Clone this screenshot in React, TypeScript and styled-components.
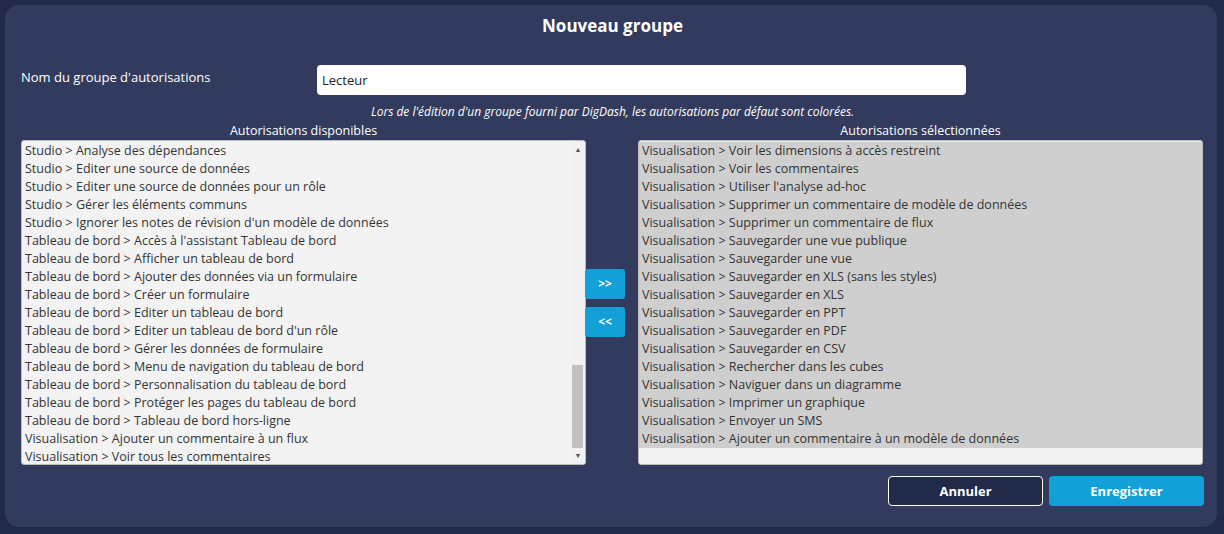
import React from "react";
import styled, { createGlobalStyle } from "styled-components";

const Global = createGlobalStyle`
  html, body { margin: 0; padding: 0; background: #222a4a; }
  body { font-family: "Open Sans", "Liberation Sans", sans-serif; }
`;

const Page = styled.div`
  width: 1224px; height: 534px; box-sizing: border-box; padding: 5px 7px 7px 5px;
`;
const Panel = styled.div`
  height: 100%; box-sizing: border-box; background: #323a5e; border-radius: 14px;
  padding: 10px 13px 0 16px; display: flex; flex-direction: column; color: #fff;
`;
const Title = styled.h1`
  margin: 0; text-align: center; font-size: 17px; font-weight: 700; line-height: 22px;
`;
const NameRow = styled.div`
  display: flex; align-items: center; margin-top: 28px; height: 30px;
`;
const Label = styled.label`
  width: 296px; font-size: 13px; margin-top: -6px;
`;
const Input = styled.div`
  width: 649px; height: 30px; box-sizing: border-box; background: #fff; border-radius: 4px;
  color: #222; font-size: 13px; line-height: 30px; padding-left: 5px;
`;
const Note = styled.div`
  text-align: center; font-style: italic; font-size: 12px; margin-top: 8px; line-height: 18px;
`;
const Lists = styled.div`
  display: flex; margin-top: 2px;
`;
const Col = styled.div`
  display: flex; flex-direction: column; width: 565px;
`;
const ColHead = styled.div`
  text-align: center; font-size: 12.5px; line-height: 16px; height: 17px;
`;
const Box = styled.div<{ $sel?: boolean }>`
  height: 325px; box-sizing: border-box; border: 1px solid #bbb; border-radius: 3px;
  background: #f3f3f3; display: flex; overflow: hidden; padding-top: 1px;
`;
const Items = styled.div<{ $sel?: boolean }>`
  flex: 1; display: flex; flex-direction: column; align-self: flex-start;
  background: ${p => (p.$sel ? "#cfcfcf" : "transparent")};
`;
const Item = styled.div`
  height: 18px; line-height: 18px; font-size: 12.5px; color: #333; padding-left: 3px; white-space: nowrap;
`;
const Scroll = styled.div`
  width: 14px; display: flex; flex-direction: column; align-items: center; background: #f1f1f1;
`;
const Arrow = styled.div`
  height: 16px; font-size: 7px; color: #555; line-height: 16px;
`;
const Track = styled.div`
  flex: 1; width: 100%; display: flex; flex-direction: column; justify-content: flex-end;
`;
const Thumb = styled.div`
  height: 83px; background: #c1c1c1; margin: 0 2px 0 1px;
`;
const Mid = styled.div`
  width: 52px; display: flex; flex-direction: column; align-items: center; justify-content: center; gap: 8px; padding-top: 17px;
`;
const MoveBtn = styled.button`
  width: 40px; height: 30px; border: 0; border-radius: 3px; background: #139fd8; color: #fff;
  font-family: inherit; font-size: 12px; font-weight: 700; margin-left: -14px;
`;
const Footer = styled.div`
  display: flex; justify-content: flex-end; gap: 6px; margin-top: 11px;
`;
const Btn = styled.button<{ $primary?: boolean }>`
  width: 155px; height: 30px; border-radius: 4px; font-family: inherit; font-size: 13px; font-weight: 700;
  color: #fff; cursor: pointer;
  background: ${p => (p.$primary ? "#139fd8" : "#222a4a")};
  border: ${p => (p.$primary ? "0" : "1px solid #fff")};
`;

const avail = [
  "Studio > Analyse des dépendances",
  "Studio > Editer une source de données",
  "Studio > Editer une source de données pour un rôle",
  "Studio > Gérer les éléments communs",
  "Studio > Ignorer les notes de révision d'un modèle de données",
  "Tableau de bord > Accès à l'assistant Tableau de bord",
  "Tableau de bord > Afficher un tableau de bord",
  "Tableau de bord > Ajouter des données via un formulaire",
  "Tableau de bord > Créer un formulaire",
  "Tableau de bord > Editer un tableau de bord",
  "Tableau de bord > Editer un tableau de bord d'un rôle",
  "Tableau de bord > Gérer les données de formulaire",
  "Tableau de bord > Menu de navigation du tableau de bord",
  "Tableau de bord > Personnalisation du tableau de bord",
  "Tableau de bord > Protéger les pages du tableau de bord",
  "Tableau de bord > Tableau de bord hors-ligne",
  "Visualisation > Ajouter un commentaire à un flux",
  "Visualisation > Voir tous les commentaires",
];
const sel = [
  "Voir les dimensions à accès restreint",
  "Voir les commentaires",
  "Utiliser l'analyse ad-hoc",
  "Supprimer un commentaire de modèle de données",
  "Supprimer un commentaire de flux",
  "Sauvegarder une vue publique",
  "Sauvegarder une vue",
  "Sauvegarder en XLS (sans les styles)",
  "Sauvegarder en XLS",
  "Sauvegarder en PPT",
  "Sauvegarder en PDF",
  "Sauvegarder en CSV",
  "Rechercher dans les cubes",
  "Naviguer dans un diagramme",
  "Imprimer un graphique",
  "Envoyer un SMS",
  "Ajouter un commentaire à un modèle de données",
].map(s => "Visualisation > " + s);

export default function App() {
  return (
    <Page>
      <Global />
      <Panel>
        <Title>Nouveau groupe</Title>
        <NameRow>
          <Label>Nom du groupe d'autorisations</Label>
          <Input>Lecteur</Input>
        </NameRow>
        <Note>Lors de l'édition d'un groupe fourni par DigDash, les autorisations par défaut sont colorées.</Note>
        <Lists>
          <Col>
            <ColHead>Autorisations disponibles</ColHead>
            <Box>
              <Items>{avail.map(a => <Item key={a}>{a}</Item>)}</Items>
              <Scroll>
                <Arrow>▲</Arrow>
                <Track><Thumb /></Track>
                <Arrow>▼</Arrow>
              </Scroll>
            </Box>
          </Col>
          <Mid>
            <MoveBtn>&gt;&gt;</MoveBtn>
            <MoveBtn>&lt;&lt;</MoveBtn>
          </Mid>
          <Col>
            <ColHead>Autorisations sélectionnées</ColHead>
            <Box>
              <Items $sel>{sel.map(a => <Item key={a}>{a}</Item>)}</Items>
            </Box>
          </Col>
        </Lists>
        <Footer>
          <Btn>Annuler</Btn>
          <Btn $primary>Enregistrer</Btn>
        </Footer>
      </Panel>
    </Page>
  );
}
